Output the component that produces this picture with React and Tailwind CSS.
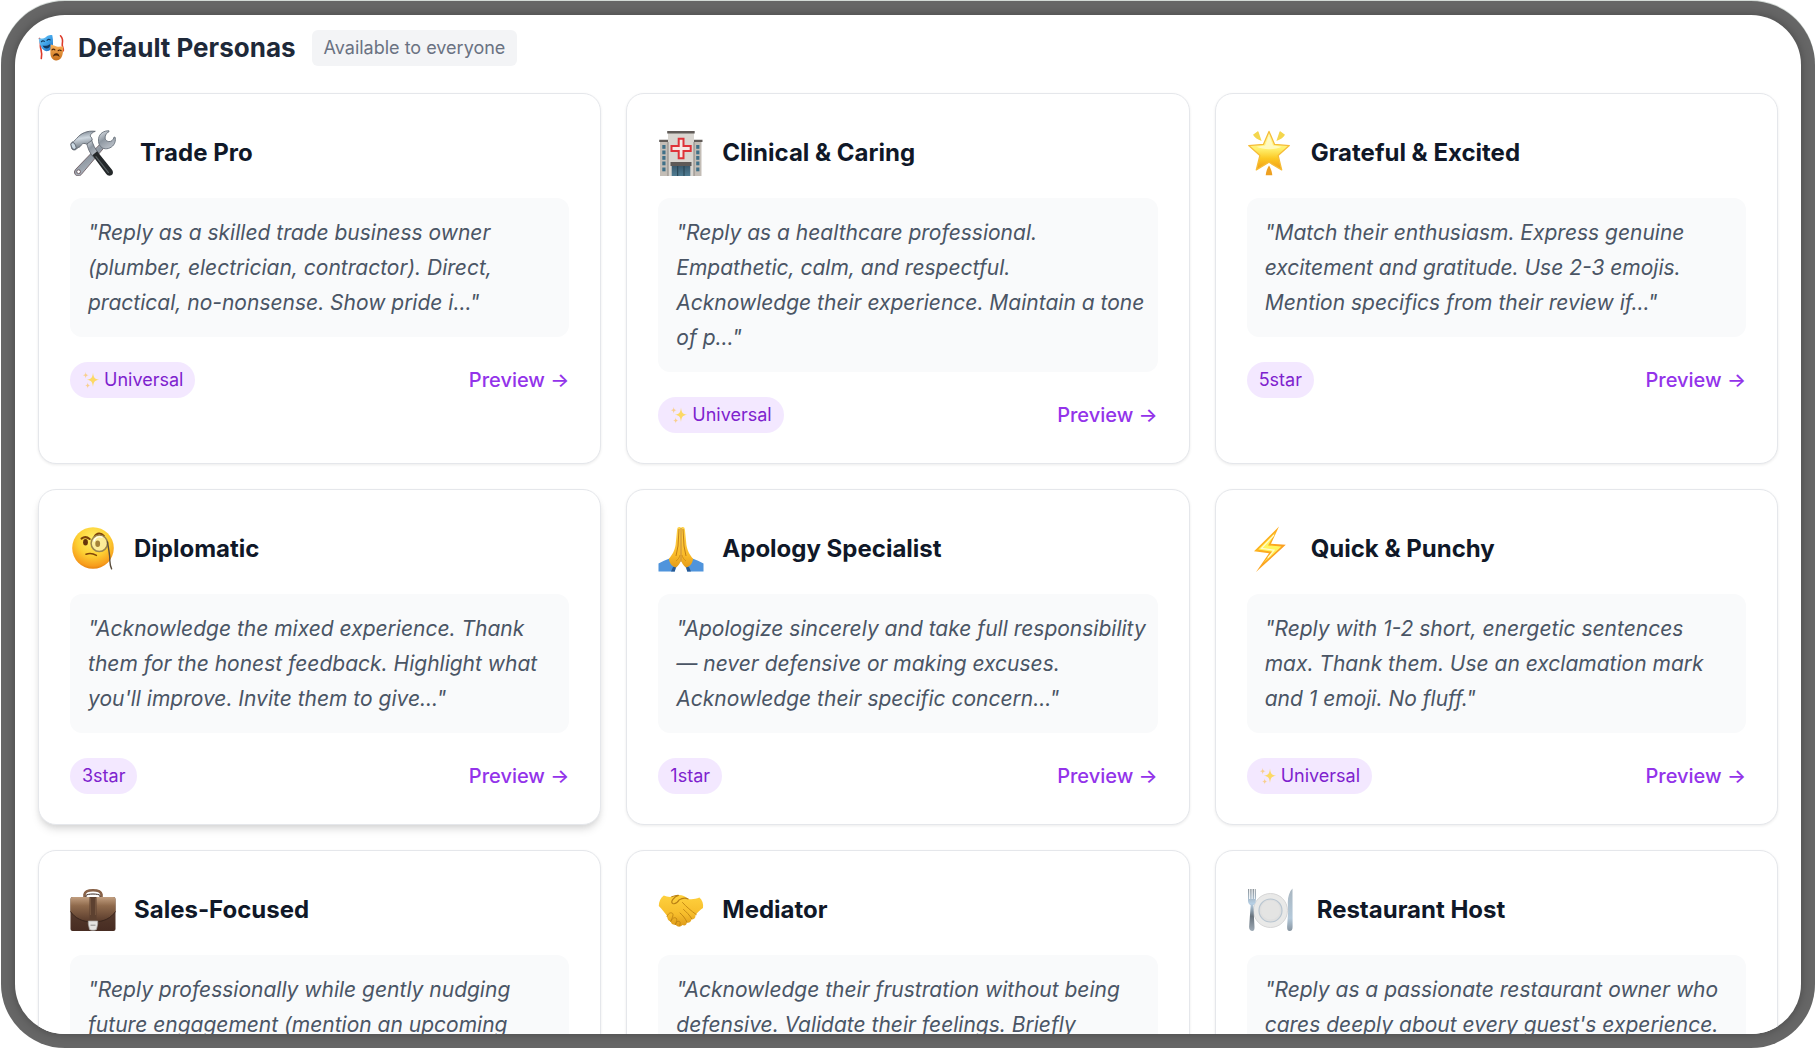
import React from 'react'

function MasksIcon() {
  return (
    <svg viewBox="0 0 28 28" className="h-7 w-7 shrink-0" aria-hidden="true">
      <defs>
        <linearGradient id="maskBlue" x1="0" y1="0" x2="1" y2="1">
          <stop offset="0" stopColor="#7fd0f7" />
          <stop offset="0.5" stopColor="#3ea3ea" />
          <stop offset="1" stopColor="#1c66b8" />
        </linearGradient>
        <linearGradient id="maskGold" x1="0" y1="0" x2="0" y2="1">
          <stop offset="0" stopColor="#fbb25a" />
          <stop offset="1" stopColor="#c8701c" />
        </linearGradient>
      </defs>
      <path d="M1.5 4.5c2 3 .3 6 1 9s2 6 .8 11" fill="none" stroke="#dd3a2a" strokeWidth="1.6" strokeLinecap="round" />
      <path d="M22.5 1.8c2 2 2.4 5 1.8 8s1.6 4 1 7" fill="none" stroke="#dd3a2a" strokeWidth="1.6" strokeLinecap="round" />
      <path d="M.8 4.2C3 5 6 4.6 8 3c2-1.6 4-2.3 6.3-1.7.6 2.7.8 5.7.7 8.7-.2 4.5-3 7-6.500 7.3C4 16.5 1 10 .8 4.2z" fill="url(#maskBlue)" />
      <path d="M3.4 7.8c.8-1.100 2-1.200 3-.4M9 6.4c.9-1.200 2.200-1.300 3.200-.5" fill="none" stroke="#12385f" strokeWidth="1.1" strokeLinecap="round" />
      <path d="M4.600 11.5c2.5.7 5.5.1 7.7-1.600 0 2.600-1.300 4.300-3.300 4.500-2 .1-3.500-1-4.400-2.900z" fill="#12385f" />
      <path d="M12.800 10.600c2.400.5 4.200 1.600 5.900 2 2 .4 4.200 0 6.500 0 .2 2.700-.1 5.800-.8 8.500-.9 3.600-3.300 5.600-6.500 5.300-3.400-.4-5.200-3.200-5.500-6.700-.2-3 0-6.100.4-9.100z" fill="url(#maskGold)" />
      <path d="M14 15.800c.8-.9 2-.9 2.900 0M20.200 16.600c.8-.8 2-.8 2.900.1" fill="none" stroke="#4c2508" strokeWidth="1.2" strokeLinecap="round" />
      <path d="M14.800 22.700c.7-2.500 1.900-3.600 3.700-3.500 1.800.1 2.800 1.400 3.100 3.800-2-1.700-4.600-1.900-6.800-.3z" fill="#4c2508" />
    </svg>
  )
}

function ToolsIcon() {
  return (
    <svg viewBox="0 0 46 46" className="h-[46px] w-[46px]" aria-hidden="true">
      <defs>
        <linearGradient id="steel" x1="0" y1="0" x2="0.6" y2="1">
          <stop offset="0" stopColor="#e6ebf0" />
          <stop offset="0.5" stopColor="#8e97a1" />
          <stop offset="1" stopColor="#b9bfc7" />
        </linearGradient>
        <linearGradient id="hammerHead" x1="0" y1="0" x2="0.2" y2="1">
          <stop offset="0" stopColor="#6c7681" />
          <stop offset="0.45" stopColor="#cfd8e0" />
          <stop offset="1" stopColor="#68717b" />
        </linearGradient>
      </defs>
      <path d="M30.4 13.8L5.4 39.6a4 4 0 0 0-.2 4.9 4 4 0 0 0 5.8.3L33.5 18.3z" fill="url(#steel)" stroke="#6f6067" strokeWidth=".9" />
      <circle cx="8.6" cy="41.7" r="1.9" fill="#fff" stroke="#6f6067" strokeWidth="1" />
      <path d="M39 .8c-5.200-.2-9.600 2.700-10.400 7.600-.6 4.400.7 7.900 3.700 9.500 3.800 2 8.700.4 11.300-3 1.500-2 2.200-4.800 1.600-7.500l-1.100-.4c-.7 3-2.600 4.700-5.300 4.600-2.900-.2-4.300-2.700-3.500-5.400.5-2.100 2-3.800 3.700-4.500z" fill="url(#steel)" stroke="#68717b" strokeWidth=".9" />
      <path d="M16.5 11.5l4.800-2.400c1.500 5.200 3.900 10 7.300 14.100l-4.900 4.300c-3.800-4.100-6.400-9.400-7.200-16z" fill="url(#steel)" stroke="#59606a" strokeWidth=".8" />
      <path d="M22.4 25.2l4.700-3.900L42 39.800c1.500 2 1.200 4.400-.7 5.500-1.900 1-4 .3-5.200-1.500z" fill="#24282a" />
      <path d="M25.7 26.300l13 16.600" stroke="#596063" strokeWidth="1.2" />
      <path d="M1 14.600c0-1.500 1-2.800 2.500-3l3-2.900C10.500 3.300 17.300.3 25.300 1.300c-2.800 1-4.700 2.600-5.200 4.800 1.300 1 2.100 2.500 2.100 4l-5.500 4.100c-2.200-1.200-4-1-5.300.6-.7 1.500-1.800 2.500-3.200 2.800l-2.900 2.200c-1.500.5-3-.1-3.700-1.400z" fill="url(#hammerHead)" stroke="#59606a" strokeWidth=".8" />
      <ellipse cx="3.5" cy="16" rx="2.2" ry="3.7" transform="rotate(-25 3.5 16)" fill="#cddbe6" stroke="#59606a" strokeWidth=".8" />
    </svg>
  )
}

function HospitalIcon() {
  const rows = [15, 20.5, 26, 31.5, 37.5]
  return (
    <svg viewBox="0 0 46 46" className="h-[46px] w-[46px]" aria-hidden="true">
      <defs>
        <linearGradient id="glassDoor" x1="0" y1="0" x2="0" y2="1">
          <stop offset="0" stopColor="#3a5a6e" />
          <stop offset="1" stopColor="#4f7c92" />
        </linearGradient>
      </defs>
      <path d="M2 11h9v35H2zM35 11h8.500v35H35z" fill="#c3bdb6" />
      <path d="M10 2.500h26V46H10z" fill="#d9d6d1" />
      <path d="M9.200 1h27.500v2.600H9.200zM1.200 9.700H10V12H1.200zM36 9.700h8.500V12H36z" fill="#615c59" />
      <path d="M10 12v34M36 12v34" stroke="#96918c" strokeWidth="1.2" />
      {rows.map((y) => (
        <g key={y} fill="#3f7088">
          <rect x="4.3" y={y} width="3.2" height="3.8" />
          <rect x="38.2" y={y} width="3.2" height="3.8" />
        </g>
      ))}
      <path d="M20.700 8.800h4.800v7.300h7.200v4.900h-7.200v7.200h-4.800V21h-7.200v-4.900h7.200z" fill="#f6e9e6" stroke="#df3339" strokeWidth="2" />
      <path d="M12.500 32h21v4h-21z" fill="#5e5a58" />
      <path d="M13.700 36h18.600v10H13.700z" fill="url(#glassDoor)" />
      <path d="M19.700 36v10M26 36v10" stroke="#24404f" strokeWidth="1" />
    </svg>
  )
}

function StarIcon() {
  return (
    <svg viewBox="0 0 46 46" className="h-[46px] w-[46px]" aria-hidden="true">
      <defs>
        <linearGradient id="starFill" x1="0" y1="0" x2="0" y2="1">
          <stop offset="0" stopColor="#fff9b0" />
          <stop offset="0.45" stopColor="#fff170" />
          <stop offset="0.7" stopColor="#fcc924" />
          <stop offset="1" stopColor="#f09a17" />
        </linearGradient>
      </defs>
      <path d="M22 1.400l5.600 13 14.700 1.200-11.200 9.800 3.600 14.500L22 32.300 9.300 39.900l3.600-14.500L1.700 15.600l14.700-1.200z" fill="url(#starFill)" stroke="#f6bd38" strokeWidth="1.3" strokeLinejoin="round" />
      <path d="M22 5.500l4 10 8.800 1.300c-7 3.300-18.500 3.300-25.500 0l8.800-1.300z" fill="#fffde4" opacity=".65" />
      <path d="M6 4.800l4.400-3.400c.6-.4 1 0 1.200.5l3 9c-3.900-1.200-7-3.100-8.600-6.100zM38 4.800l-4.400-3.400c-.6-.4-1 0-1.200.5l-3 9c3.900-1.200 7-3.100 8.600-6.100z" fill="#f4d64d" />
      <path d="M22 35.500c1.800 3 2.900 6 3.300 9.800h-6.600c.4-3.800 1.500-6.800 3.300-9.800z" fill="#eea021" />
    </svg>
  )
}

function MonocleIcon() {
  return (
    <svg viewBox="0 0 46 46" className="h-[46px] w-[46px]" aria-hidden="true">
      <defs>
        <radialGradient id="faceFill" cx=".5" cy=".3" r=".7">
          <stop offset="0" stopColor="#fff06b" />
          <stop offset="0.55" stopColor="#fdd033" />
          <stop offset="0.9" stopColor="#f79c1c" />
          <stop offset="1" stopColor="#e5820f" />
        </radialGradient>
      </defs>
      <circle cx="23" cy="22" r="20.8" fill="url(#faceFill)" />
      <path d="M11.500 12.600c2.800-2.200 5.500-1.900 8.200.4M24.500 10.700c2.500-4 6.500-4.100 9.300-.7" fill="none" stroke="#7b4109" strokeWidth="2" strokeLinecap="round" />
      <ellipse cx="15.5" cy="16.3" rx="2.4" ry="3.3" fill="#67350b" />
      <circle cx="29.3" cy="17.3" r="8.2" fill="#fbf2b5" fillOpacity=".75" stroke="#9a854e" strokeWidth="1.5" />
      <path d="M24 15c1.200-3.300 4.500-5 8-3.800" fill="none" stroke="#fff" strokeWidth="1.3" strokeLinecap="round" />
      <ellipse cx="27.7" cy="17.8" rx="2.4" ry="3.3" fill="#a48339" />
      <path d="M37.600 16c1 8 2.400 13 2.200 18 .2 3.300.2 6 1.800 8.800" fill="none" stroke="#594d3d" strokeWidth="1.4" strokeLinecap="round" />
      <path d="M16 28.200c3.500-1.300 7-.9 10.400 1.200" fill="none" stroke="#824609" strokeWidth="1.5" strokeLinecap="round" />
    </svg>
  )
}

function PrayIcon() {
  return (
    <svg viewBox="0 0 46 46" className="h-[46px] w-[46px]" aria-hidden="true">
      <defs>
        <linearGradient id="handFill" x1="0" y1="0" x2="0" y2="1">
          <stop offset="0" stopColor="#fed24a" />
          <stop offset="0.7" stopColor="#f9ba29" />
          <stop offset="1" stopColor="#e49b18" />
        </linearGradient>
      </defs>
      <path d="M.5 37.500c3.600-2 7.300-3.600 11-5l8 6.500c-1.300 2-2.300 4-2.700 6.500H.5zM45.500 37.500c-3.600-2-7.300-3.600-11-5l-8 6.500c1.300 2 2.300 4 2.700 6.500h16.300z" fill="#4f94dc" />
      <path d="M15 41l-2 4.500h3.800c.3-2 1-3.800 2-5.400zM31 41l2 4.500h-3.800c-.3-2-1-3.800-2-5.400z" fill="#285a94" />
      <path d="M22.800 1.400c-1.900-1-3.400-.4-3.700 2l-1.500 15.300c-1.100 6.500-3 9.500-6.700 14.100.5 4.200 3 7.900 6.900 8.700 2.500-1.300 4.300-3.900 5-6.900z" fill="url(#handFill)" />
      <path d="M23.200 1.400c1.900-1 3.400-.4 3.700 2l1.500 15.300c1.100 6.500 3 9.500 6.700 14.100-.5 4.200-3 7.900-6.900 8.700-2.500-1.300-4.300-3.900-5-6.900z" fill="url(#handFill)" />
      <path d="M23 2v34M21 3l-1 17-2 10M25 3l1 17 2 10" fill="none" stroke="#bd7811" strokeWidth=".9" />
      <path d="M18 35c2-1.500 3.500-3.500 4-6M28 35c-2-1.500-3.500-3.500-4-6" fill="none" stroke="#cc8914" strokeWidth=".8" />
    </svg>
  )
}

function BoltIcon() {
  return (
    <svg viewBox="0 0 46 46" className="h-[46px] w-[46px]" aria-hidden="true">
      <defs>
        <linearGradient id="boltEdge" x1="0" y1="0" x2="1" y2="1">
          <stop offset="0" stopColor="#ffc21c" />
          <stop offset="1" stopColor="#f98e24" />
        </linearGradient>
      </defs>
      <path d="M32 .5L7 25.300l15 2L9 46 38.800 18.800 24 17.800z" fill="url(#boltEdge)" />
      <path d="M28.500 6.500L11.200 23.600l14.400 2.200-9.300 11.200L34.500 20.600l-13.500-1.200z" fill="#fff45c" />
      <path d="M27 9L14.500 22.300l12.500 2-6.200 7.500" fill="none" stroke="#fffbd0" strokeWidth="1.2" />
    </svg>
  )
}

function BriefcaseIcon() {
  return (
    <svg viewBox="0 0 46 46" className="h-[46px] w-[46px]" aria-hidden="true">
      <defs>
        <linearGradient id="leather" x1="0" y1="0" x2="0" y2="1">
          <stop offset="0" stopColor="#5f4435" />
          <stop offset="1" stopColor="#472c22" />
        </linearGradient>
        <linearGradient id="flap" x1="0" y1="0" x2="0" y2="1">
          <stop offset="0" stopColor="#c29f80" />
          <stop offset="0.35" stopColor="#8f6a4c" />
          <stop offset="1" stopColor="#583a2b" />
        </linearGradient>
      </defs>
      <path d="M14.500 11V7.500C15 4.500 18 3.200 23 3.200s8 1.300 8.500 4.300V11" fill="none" stroke="#876147" strokeWidth="2.6" />
      <path d="M16 11V8.500c1-2 13-2 14 0V11" fill="none" stroke="#35251e" strokeWidth="1" />
      <rect x=".5" y="10" width="45" height="34" rx="2" fill="url(#leather)" />
      <path d="M.5 12.500c0-1.500.8-2.500 2.300-2.500h40.400c1.500 0 2.300 1 2.300 2.500v12C41 31 34 35 23 35S5 31 .5 24.500z" fill="url(#flap)" />
      <path d="M.5 24.500C5 31 12 35 23 35s18-4 22.500-10.500" fill="none" stroke="#35221b" strokeWidth=".9" />
      <path d="M19.500 10h7v25h-7z" fill="#5d4130" />
      <path d="M20.500 11v17M25.500 11v17" stroke="#7d5d45" strokeWidth=".7" />
      <path d="M18.300 34h9.400v3l-1.200 5.500c-1 1-6 1-7 0L18.300 37z" fill="#e5e4e2" stroke="#a7a5a2" strokeWidth=".7" />
      <path d="M20.500 38.200h5" stroke="#8f8d8b" strokeWidth="1" />
    </svg>
  )
}

function HandshakeIcon() {
  return (
    <svg viewBox="0 0 46 46" className="h-[46px] w-[46px]" aria-hidden="true">
      <defs>
        <linearGradient id="shakeFill" x1="0" y1="0" x2="0" y2="1">
          <stop offset="0" stopColor="#fed13e" />
          <stop offset="0.6" stopColor="#f7bd2b" />
          <stop offset="1" stopColor="#dc991a" />
        </linearGradient>
      </defs>
      <path d="M5.800 8.500C2.500 10.800.9 14.500.8 19c3 3 5.600 6.500 8.200 9.800.2 3 1 5.100 3.700 5.700.6 2.300 2 3.600 4.700 3.300 2.500 2.500 5 2.300 7 .3 2.400 1 4.200 0 4.500-2.500 2.600.4 4.300-.7 4.500-3 2.600-.1 4.200-1.700 4.100-4.200 2.300-3.300 4.500-5.200 7.500-7.300.7-4.300-.8-8.100-3.600-10.600-3.600 1.300-7.200 2.100-11.200 1.400-3.300-2.900-7.300-4.500-11.700-3.600-1.700.3-3.300 1.100-4.700 1.500-3 .3-5.600-.2-8-1.300z" fill="url(#shakeFill)" />
      <path d="M13.800 9.800c2-.8 4-1.600 6.500-1.500M30.200 11.900c-3.500-1.500-6-1-9 1-1.800 2.800-3.500 4.500-6.300 3.700-1.700-.6-1.400-2.200 0-4.200 1.500-2 3-3.300 5.500-4" fill="none" stroke="#b87f14" strokeWidth="1.1" strokeLinecap="round" />
      <path d="M24.500 15.500c4 4.500 8.500 8.200 13.700 12M25.500 22.500c3 2.500 5.500 5 8.300 9.300M22 26c3 2.500 5 5 7 9.300" fill="none" stroke="#bf8413" strokeWidth=".9" strokeLinecap="round" />
      <path d="M9 29.500c1-2.800 3.200-4.500 5.300-3.300 1.500 1 .5 3.500-1.600 8.300M13 34c1-2.500 3.200-4 5-3 1.500 1.200.8 3.500-.8 6.700M17.500 37.500c.5-2.300 2-3.700 3.700-3.200 1.300.6 1.200 2 .5 4" fill="none" stroke="#bf8413" strokeWidth=".9" strokeLinecap="round" />
    </svg>
  )
}

function PlateIcon() {
  return (
    <svg viewBox="0 0 46 46" className="h-[46px] w-[46px]" aria-hidden="true">
      <defs>
        <linearGradient id="cutlery" x1="0" y1="0" x2="0" y2="1">
          <stop offset="0" stopColor="#8e959b" />
          <stop offset="0.35" stopColor="#b7d0e5" />
          <stop offset="0.65" stopColor="#67727c" />
          <stop offset="1" stopColor="#9fabb6" />
        </linearGradient>
        <linearGradient id="knife" x1="0" y1="0" x2="0" y2="1">
          <stop offset="0" stopColor="#a9b6c0" />
          <stop offset="0.7" stopColor="#b4c9da" />
          <stop offset="1" stopColor="#8794a0" />
        </linearGradient>
      </defs>
      <circle cx="23.5" cy="23.5" r="17" fill="#e9e9e8" stroke="#d2d3d4" strokeWidth=".9" />
      <circle cx="23.5" cy="23.5" r="11.5" fill="#dfdfdf" stroke="#b9c6d1" strokeWidth="1.2" />
      <circle cx="23.5" cy="23" r="9.5" fill="#e4e4e3" />
      <path d="M1 2h1.200v10h1V2h1.400v10h1V2H7v10h.8V2h.9c.4 6 .5 9 .1 12-.3 2.300-1.400 3.500-2.500 4.200L7.500 40c.1 2.700-.5 4-2.200 4s-3.300-1.300-3.200-4l1.600-21.800C2.200 17.500 1.200 16.300 1 14z" fill="url(#cutlery)" />
      <path d="M45.500 1.500c-3 3-4.700 8-4.700 14l.3 10-1 14c-.1 3 .6 4.500 2.600 4.500s3-1.500 2.900-4.500z" fill="url(#knife)" />
    </svg>
  )
}

function SparklesIcon() {
  return (
    <svg viewBox="0 0 18 18" className="h-[18px] w-[18px]" aria-hidden="true">
      <path d="M11 1.500c.5 4.800 1.400 6.700 6.200 7.300-4.800.6-5.700 2.500-6.200 7.300-.5-4.800-1.400-6.700-6.200-7.300 4.800-.6 5.700-2.500 6.200-7.300z" fill="#fcd965" />
      <path d="M3.700.8c.2 2.300.6 3.100 2.900 3.400-2.300.3-2.700 1.100-2.900 3.400C3.500 5.300 3.100 4.500.8 4.200 3.100 3.900 3.500 3.100 3.700.8zM5.700 11.200c.2 2.200.6 2.900 2.700 3.200-2.100.3-2.500 1-2.700 3.200-.2-2.200-.6-2.900-2.700-3.200 2.100-.3 2.500-1 2.700-3.200z" fill="#f8cf8e" />
    </svg>
  )
}

const personas = [
  {
    name: 'Trade Pro',
    icon: ToolsIcon,
    wideIcon: true,
    tag: 'Universal',
    prompt: '"Reply as a skilled trade business owner\n(plumber, electrician, contractor). Direct,\npractical, no-nonsense. Show pride i..."',
  },
  {
    name: 'Clinical & Caring',
    icon: HospitalIcon,
    tag: 'Universal',
    prompt: '"Reply as a healthcare professional.\nEmpathetic, calm, and respectful.\nAcknowledge their experience. Maintain a tone\nof p..."',
  },
  {
    name: 'Grateful & Excited',
    icon: StarIcon,
    tag: '5star',
    prompt: '"Match their enthusiasm. Express genuine\nexcitement and gratitude. Use 2-3 emojis.\nMention specifics from their review if..."',
  },
  {
    name: 'Diplomatic',
    icon: MonocleIcon,
    tag: '3star',
    raised: true,
    prompt: '"Acknowledge the mixed experience. Thank\nthem for the honest feedback. Highlight what\nyou\'ll improve. Invite them to give..."',
  },
  {
    name: 'Apology Specialist',
    icon: PrayIcon,
    tag: '1star',
    prompt: '"Apologize sincerely and take full responsibility\n— never defensive or making excuses.\nAcknowledge their specific concern..."',
  },
  {
    name: 'Quick & Punchy',
    icon: BoltIcon,
    tag: 'Universal',
    prompt: '"Reply with 1-2 short, energetic sentences\nmax. Thank them. Use an exclamation mark\nand 1 emoji. No fluff."',
  },
  {
    name: 'Sales-Focused',
    icon: BriefcaseIcon,
    prompt: '"Reply professionally while gently nudging\nfuture engagement (mention an upcoming',
  },
  {
    name: 'Mediator',
    icon: HandshakeIcon,
    prompt: '"Acknowledge their frustration without being\ndefensive. Validate their feelings. Briefly',
  },
  {
    name: 'Restaurant Host',
    icon: PlateIcon,
    wideIcon: true,
    prompt: '"Reply as a passionate restaurant owner who\ncares deeply about every guest\'s experience.',
  },
]

function PersonaCard({ persona }) {
  const Icon = persona.icon

  return (
    <article
      className={`rounded-[18px] border border-gray-200 bg-white px-[31px] pt-8 pb-[30px] ${
        persona.raised
          ? 'shadow-[0_6px_9px_-1px_rgba(0,0,0,0.1),0_3px_6px_-2px_rgba(0,0,0,0.1)]'
          : 'shadow-[0_1px_3px_rgba(0,0,0,0.08)]'
      }`}
    >
      <div className="mb-[18px] flex h-[54px] items-center gap-[18px]">
        <div className={persona.wideIcon ? 'w-[52px]' : 'w-[46px]'}>
          <Icon />
        </div>
        <h3 className="text-2xl font-bold text-gray-900">{persona.name}</h3>
      </div>

      <p className="mb-[25px] rounded-xl bg-gray-50 py-[17px] pr-2 pl-[18px] text-[21px] leading-[35px] whitespace-pre-line text-gray-600 italic">
        {persona.prompt}
      </p>

      {persona.tag && (
        <div className="flex items-center justify-between">
          <span className="flex h-9 items-center gap-1 rounded-full bg-purple-100 px-3 text-lg text-[#7e22ce]">
            {persona.tag === 'Universal' && <SparklesIcon />}
            {persona.tag}
          </span>
          <button type="button" className="text-xl font-medium text-[#9333ea]">
            Preview →
          </button>
        </div>
      )}
    </article>
  )
}

export default function App() {
  return (
    <div className="h-screen bg-white px-px pt-px font-['Inter','Liberation_Sans',sans-serif]">
      <div className="h-full rounded-[64px] bg-[#666] p-[14px] shadow-[0_-1px_0_#d3dad6]">
        <div className="h-full rounded-[50px] shadow-[0_0_10px_rgba(0,0,0,0.3)]">
          <main className="h-full overflow-hidden rounded-[50px] bg-white px-[23px] pt-[15px]">
            <header className="mb-[27px] flex items-center gap-4">
              <h2 className="flex items-center gap-3 text-[26px] leading-9 font-bold text-gray-800">
                <MasksIcon />
                Default Personas
              </h2>
              <span className="flex h-9 items-center rounded-md bg-gray-100 px-3 text-lg text-gray-500">
                Available to everyone
              </span>
            </header>

            <div className="grid grid-cols-3 gap-[25px]">
              {personas.map((persona) => (
                <PersonaCard key={persona.name} persona={persona} />
              ))}
            </div>
          </main>
        </div>
      </div>
    </div>
  )
}
